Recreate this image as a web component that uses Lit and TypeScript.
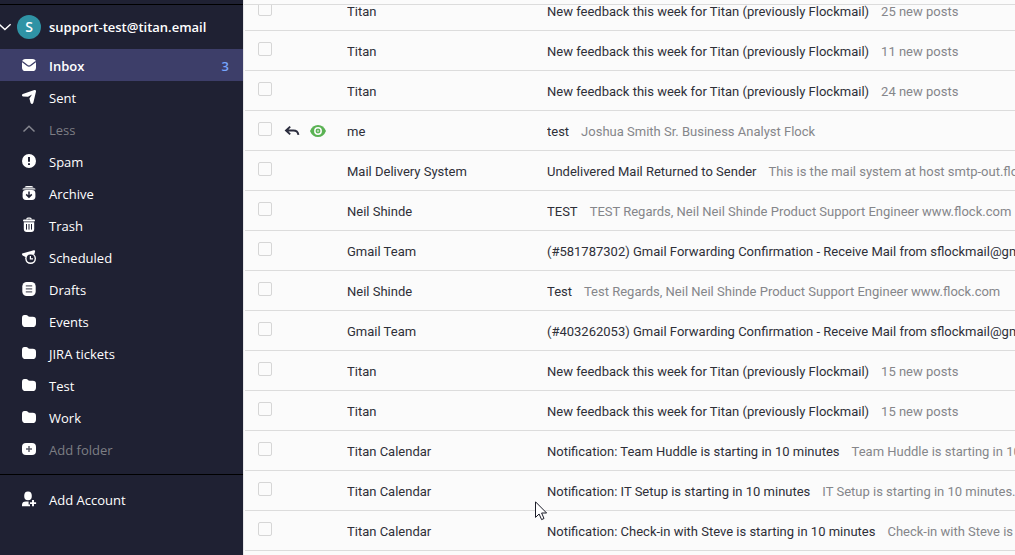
import { LitElement, html, css, svg, nothing, TemplateResult } from "lit";
import { customElement, property } from "lit/decorators.js";

const icon = (body: TemplateResult, size = 16) => html`
  <svg width=${size} height=${size} viewBox="0 0 16 16" aria-hidden="true">${body}</svg>
`;

const icons: Record<string, TemplateResult> = {
  inbox: svg`
    <rect x="1" y="2" width="14" height="12" rx="3.6" fill="#fff"/>
    <path d="M1.2 4.4 6.4 8.6Q8 9.8 9.6 8.6L14.8 4.4" fill="none" stroke="#3d3e69" stroke-width="1.3"/>`,
  sent: svg`
    <path d="M13.4 1.1Q15.2.7 15 2.5L12.4 13.4Q11.2 16.2 9.6 14L8.4 9.6 11 5.6 7 7.8 2 7.4Q0 6.2 1.8 5Z" fill="#fff"/>`,
  less: svg`<path d="M2.5 10.5 8 5.2 13.5 10.5" fill="none" stroke="#85868f" stroke-width="1.5"/>`,
  spam: svg`
    <circle cx="8" cy="8" r="7" fill="#fff"/>
    <path d="M8 4V8.8M8 10.2V12" stroke="#1f2133" stroke-width="2"/>`,
  archive: svg`
    <path d="M3.4 2.6Q4 1 5.6 1H10.4Q12 1 12.6 2.6Z" fill="#fff"/>
    <path d="M1.4 4.4Q1.6 3.3 3 3.3H13Q14.4 3.3 14.6 4.4Z" fill="#fff"/>
    <rect x="1.6" y="5" width="12.8" height="10" rx="3.4" fill="#fff"/>
    <path d="M8 6.6V12M5.2 9.4 8 12.1 10.8 9.4" fill="none" stroke="#1f2133" stroke-width="1.5"/>`,
  trash: svg`
    <path d="M5.8 2.4Q5.8 1.2 7 1.2H9Q10.2 1.2 10.2 2.4" fill="none" stroke="#fff" stroke-width="1.2"/>
    <rect x="2" y="2.4" width="12" height="2" rx="1" fill="#fff"/>
    <path d="M2.8 5.2H13.2V12Q13.2 15 10.2 15H5.8Q2.8 15 2.8 12Z" fill="#fff"/>
    <path d="M5.5 7V12.6M8 7V12.6M10.5 7V12.6" stroke="#1f2133" stroke-width="1"/>`,
  scheduled: svg`
    <path d="M1.2 4.4 12.8 1.2Q14.6 1 14 2.8L13.4 5 5 8.2 1.6 6.4Q.4 5.2 1.2 4.4Z" fill="#fff"/>
    <circle cx="9.6" cy="9.6" r="5.4" fill="#fff"/>
    <circle cx="9.6" cy="9.6" r="4" fill="#1f2133"/>
    <path d="M9.4 7V9.9H12" fill="none" stroke="#fff" stroke-width="1.2"/>`,
  drafts: svg`
    <rect x="1.3" y="1" width="13.4" height="14" rx="4.4" fill="#fff"/>
    <path d="M4.8 4.9H11.2M4.8 7.9H11.2M4.8 10.9H11.2" stroke="#5c5d69" stroke-width="1.4"/>`,
  folder: svg`
    <path d="M1 5Q1 2 3.4 2H5Q6.4 2 7 3 7.4 3.8 8.6 3.8H11.8Q15 3.8 15 7V10.4Q15 14 11.4 14H5Q1 14 1 10.4Z" fill="#fff"/>`,
  add: svg`
    <rect x="1" y="2" width="14" height="12" rx="4" fill="#fff"/>
    <path d="M8 5V11M5 8H11" stroke="#5c5d69" stroke-width="1.5"/>`,
  account: svg`
    <ellipse cx="7" cy="4.9" rx="3.8" ry="4.4" fill="#fff"/>
    <path d="M1 15.2V13.8Q1 10.4 5 10.4H7.6V13.6H9V15.2Z" fill="#fff"/>
    <path d="M12 9V15.2M8.9 12.1H15.1" stroke="#fff" stroke-width="1.9"/>`,
  chevron: svg`<path d="M1.4 4.8 7.9 11 14.4 4.8" fill="none" stroke="#fff" stroke-width="1.6"/>`,
  reply: svg`
    <path d="M6.2 3.6 2 7.5 6.2 11.4M2.2 7.5H9.4Q13.8 7.5 14.4 11.8" fill="none" stroke="#2b2d3e" stroke-width="1.9"/>`,
  eye: svg`
    <path d="M0 8Q2.4 2 8 2T16 8Q13.6 14 8 14T0 8Z" fill="#5ab253"/>
    <circle cx="8" cy="8" r="3.2" fill="none" stroke="#fbfbfb" stroke-width="1.5"/>
    <circle cx="8" cy="8" r="1.2" fill="#fbfbfb" opacity=".5"/>`,
};

interface Folder { name: string; icon: string; count?: number; active?: boolean; toggle?: boolean; muted?: boolean }

const folders: Folder[] = [
  { name: "Inbox", icon: "inbox", count: 3, active: true },
  { name: "Sent", icon: "sent" },
  { name: "Less", icon: "less", toggle: true },
  { name: "Spam", icon: "spam" },
  { name: "Archive", icon: "archive" },
  { name: "Trash", icon: "trash" },
  { name: "Scheduled", icon: "scheduled" },
  { name: "Drafts", icon: "drafts" },
  { name: "Events", icon: "folder" },
  { name: "JIRA tickets", icon: "folder" },
  { name: "Test", icon: "folder" },
  { name: "Work", icon: "folder" },
  { name: "Add folder", icon: "add", toggle: true },
];

interface Mail { from: string; subject: string; preview: string; replied?: boolean }

const feedback = "New feedback this week for Titan (previously Flockmail)";

const mails: Mail[] = [
  { from: "Titan", subject: feedback, preview: "25 new posts" },
  { from: "Titan", subject: feedback, preview: "11 new posts" },
  { from: "Titan", subject: feedback, preview: "24 new posts" },
  { from: "me", subject: "test", preview: "Joshua Smith Sr. Business Analyst Flock", replied: true },
  { from: "Mail Delivery System", subject: "Undelivered Mail Returned to Sender", preview: "This is the mail system at host smtp-out.flock.com" },
  { from: "Neil Shinde", subject: "TEST", preview: "TEST Regards, Neil Neil Shinde Product Support Engineer www.flock.com" },
  { from: "Gmail Team", subject: "(#581787302) Gmail Forwarding Confirmation - Receive Mail from sflockmail@gmail.com", preview: "" },
  { from: "Neil Shinde", subject: "Test", preview: "Test Regards, Neil Neil Shinde Product Support Engineer www.flock.com" },
  { from: "Gmail Team", subject: "(#403262053) Gmail Forwarding Confirmation - Receive Mail from sflockmail@gmail.com", preview: "" },
  { from: "Titan", subject: feedback, preview: "15 new posts" },
  { from: "Titan", subject: feedback, preview: "15 new posts" },
  { from: "Titan Calendar", subject: "Notification: Team Huddle is starting in 10 minutes", preview: "Team Huddle is starting in 10 minutes." },
  { from: "Titan Calendar", subject: "Notification: IT Setup is starting in 10 minutes", preview: "IT Setup is starting in 10 minutes." },
  { from: "Titan Calendar", subject: "Notification: Check-in with Steve is starting in 10 minutes", preview: "Check-in with Steve is starting in 10 minutes." },
];

@customElement("mail-sidebar")
export class MailSidebar extends LitElement {
  static styles = css`
    :host { display: block; background: #1f2133; color: #fff; }
    svg { display: block; flex: none; }
    .panel { margin-top: 4px; border-top: 1px solid #000; }
    .account, .item {
      display: flex; align-items: center; box-sizing: border-box; width: 100%;
      margin: 0; border: 0; background: none; color: inherit;
      font: inherit; text-align: left; text-decoration: none; cursor: pointer;
    }
    .account { height: 44px; padding: 0 8px 0 0; font-weight: 600; }
    .arrow { width: 17px; flex: none; overflow: hidden; }
    .arrow svg { margin-left: -2px; }
    .avatar {
      width: 24px; height: 24px; margin-right: 8px; border-radius: 50%; background: #2f93a5;
      line-height: 24px; text-align: center; font-size: 14px; flex: none;
    }
    .item { height: 32px; padding: 0 14px 0 21px; gap: 12px; }
    .item svg { margin-bottom: 1px; }
    .label { flex: 1; line-height: 20px; padding-top: 2px; }
    .active { background: #3d3e69; font-weight: 600; }
    .muted { color: #7d7e84; }
    .count { color: #76a4fc; padding-top: 2px; }
    .foot { margin-top: 9px; padding-top: 8px; border-top: 1px solid #000; }
  `;

  render() {
    return html`
      <div class="panel">
        <button class="account" type="button">
          <span class="arrow">${icon(icons.chevron, 14)}</span>
          <span class="avatar">S</span>
          <span>support-test@titan.email</span>
        </button>
        <nav aria-label="Folders">${folders.map((f) => this.folder(f))}</nav>
        <div class="foot">
          <button class="item" type="button">
            ${icon(icons.account)}<span class="label">Add Account</span>
          </button>
        </div>
      </div>
    `;
  }

  private folder(f: Folder) {
    const body = html`
      ${icon(icons[f.icon])}<span class="label">${f.name}</span>
      ${f.count ? html`<span class="count">${f.count}</span>` : nothing}
    `;
    return f.toggle
      ? html`<button class="item muted" type="button">${body}</button>`
      : html`<a class="item ${f.active ? "active" : ""}" href="#">${body}</a>`;
  }
}

@customElement("mail-row")
export class MailRow extends LitElement {
  @property({ attribute: false }) mail!: Mail;

  static styles = css`
    :host {
      display: grid; grid-template-columns: 26px 63px 200px minmax(0, 1fr); align-items: center;
      box-sizing: border-box; height: 40px; margin-left: 1px; padding-left: 13px;
      border-bottom: 1px solid #dcdcdc; color: #2e2f38; white-space: nowrap;
    }
    svg { display: block; }
    .check {
      appearance: none; box-sizing: border-box; width: 14px; height: 14px; margin: 0 0 3px;
      border: 1px solid #d6d6d6; border-radius: 2px; background: #fbfbfb;
    }
    .flags { display: flex; gap: 10px; }
    .from, .text { padding-top: 2px; line-height: 20px; overflow: hidden; }
    .text { color: inherit; text-decoration: none; }
    .preview { margin-left: 12px; color: #85868a; }
  `;

  render() {
    const m = this.mail;
    return html`
      <input class="check" type="checkbox" aria-label="Select message from ${m.from}" />
      <span class="flags">${m.replied ? html`${icon(icons.reply)}${icon(icons.eye)}` : nothing}</span>
      <span class="from">${m.from}</span>
      <a class="text" href="#">${m.subject}<span class="preview">${m.preview}</span></a>
    `;
  }
}

@customElement("app-root")
export class AppRoot extends LitElement {
  static styles = css`
    :host {
      display: grid; grid-template-columns: 243px minmax(0, 1fr); position: relative;
      height: 100vh; overflow: hidden; background: #fbfbfb;
      font: 13px/20px "Segoe UI", "Open Sans", "Noto Sans", sans-serif;
    }
    .main {
      display: flex; flex-direction: column; min-width: 0; min-height: 0;
      padding-top: 4px; border-left: 1px solid #e6e6e8;
      font-family: "Segoe UI", Roboto, sans-serif;
    }
    .view { flex: 1; min-height: 0; overflow: hidden; border-top: 1px solid #dcdcdc; }
    .list { margin-top: -14px; }
    .pointer { position: absolute; left: 535px; top: 501px; pointer-events: none; }
  `;

  render() {
    return html`
      <mail-sidebar></mail-sidebar>
      <main class="main">
        <div class="view">
          <div class="list">${mails.map((m) => html`<mail-row .mail=${m}></mail-row>`)}</div>
        </div>
      </main>
      <svg class="pointer" width="13" height="20" viewBox="0 0 13 20" aria-hidden="true">
        <path d="M.5.8V16.4L4.1 13 6.6 18.6 9 17.5 6.6 12H11.6Z" fill="#fff" stroke="#1b1c28" stroke-width="1"/>
      </svg>
    `;
  }
}
